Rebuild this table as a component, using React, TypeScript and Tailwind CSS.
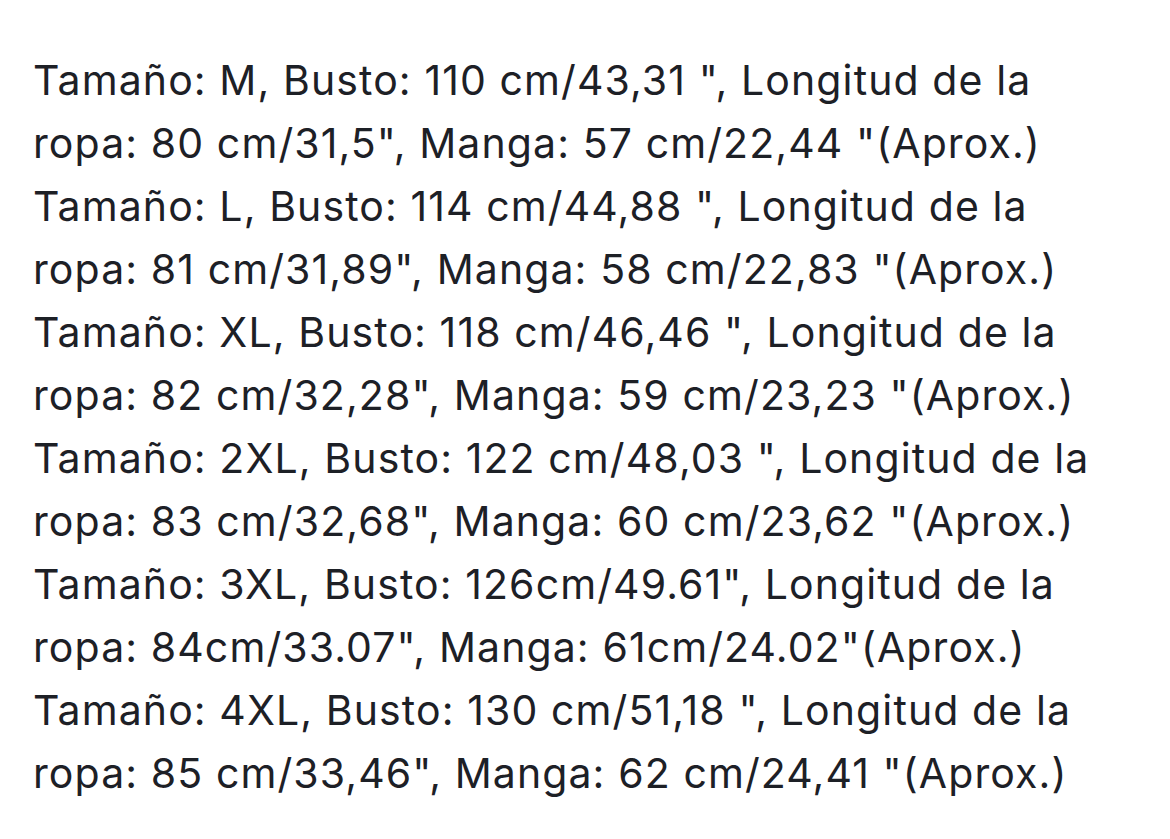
const lines = [
  'Tamaño: M, Busto: 110 cm/43,31 ", Longitud de la',
  'ropa: 80 cm/31,5", Manga: 57 cm/22,44 "(Aprox.)',
  'Tamaño: L, Busto: 114 cm/44,88 ", Longitud de la',
  'ropa: 81 cm/31,89", Manga: 58 cm/22,83 "(Aprox.)',
  'Tamaño: XL, Busto: 118 cm/46,46 ", Longitud de la',
  'ropa: 82 cm/32,28", Manga: 59 cm/23,23 "(Aprox.)',
  'Tamaño: 2XL, Busto: 122 cm/48,03 ", Longitud de la',
  'ropa: 83 cm/32,68", Manga: 60 cm/23,62 "(Aprox.)',
  'Tamaño: 3XL, Busto: 126cm/49.61", Longitud de la',
  'ropa: 84cm/33.07", Manga: 61cm/24.02"(Aprox.)',
  'Tamaño: 4XL, Busto: 130 cm/51,18 ", Longitud de la',
  'ropa: 85 cm/33,46", Manga: 62 cm/24,41 "(Aprox.)',
];

export default function App() {
  return (
    <div className="w-[1170px] h-[839px] bg-white pt-[49px] pl-[33px] font-['Inter',sans-serif] text-[41px] leading-[63px] tracking-[1.1px] text-[#1d2026]">
      {lines.map((l, i) => (
        <p key={i} className="whitespace-pre">{l}</p>
      ))}
    </div>
  );
}
